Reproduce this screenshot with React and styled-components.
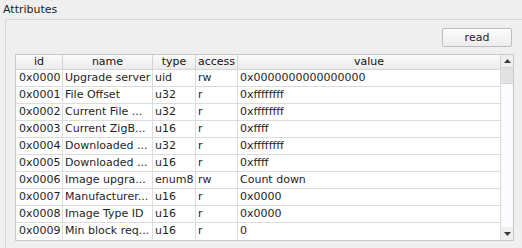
import React from "react";
import styled, { createGlobalStyle } from "styled-components";

const GlobalStyle = createGlobalStyle`
  body {
    margin: 0;
    background: #efefef;
    font-family: "DejaVu Sans", "Liberation Sans", sans-serif;
    font-size: 11px;
    color: #1e1e1e;
  }
`;

const attributes = [
  { id: "0x0000", name: "Upgrade server", type: "uid", access: "rw", value: "0x0000000000000000" },
  { id: "0x0001", name: "File Offset", type: "u32", access: "r", value: "0xffffffff" },
  { id: "0x0002", name: "Current File ...", type: "u32", access: "r", value: "0xffffffff" },
  { id: "0x0003", name: "Current ZigB...", type: "u16", access: "r", value: "0xffff" },
  { id: "0x0004", name: "Downloaded ...", type: "u32", access: "r", value: "0xffffffff" },
  { id: "0x0005", name: "Downloaded ...", type: "u16", access: "r", value: "0xffff" },
  { id: "0x0006", name: "Image upgra...", type: "enum8", access: "rw", value: "Count down" },
  { id: "0x0007", name: "Manufacturer...", type: "u16", access: "r", value: "0x0000" },
  { id: "0x0008", name: "Image Type ID", type: "u16", access: "r", value: "0x0000" },
  { id: "0x0009", name: "Min block req...", type: "u16", access: "r", value: "0" },
];

const columns = ["id", "name", "type", "access", "value"];

const Page = styled.div`
  width: 522px;
  height: 248px;
  overflow: hidden;
`;

const Title = styled.div`
  padding: 3px 0 0 3px;
  height: 16px;
  line-height: 13px;
`;

const GroupBox = styled.div`
  margin-left: 5px;
  border: 1px solid #d6d6d6;
  border-right: none;
  border-radius: 2px 0 0 2px;
  padding: 8px 9px 0 9px;
  height: 240px;
`;

const Toolbar = styled.div`
  display: flex;
  justify-content: flex-end;
  padding-right: 1px;
  margin-bottom: 7px;
`;

const Button = styled.button`
  width: 70px;
  height: 19px;
  padding: 0;
  font: inherit;
  color: #1e1e1e;
  border: 1px solid #bdbdbd;
  border-radius: 2px;
  background: linear-gradient(#fdfdfd, #ececec);
`;

const Table = styled.div`
  display: flex;
  width: 497px;
  border: 1px solid #c8c8c8;
  background: #ffffff;
`;

const Grid = styled.div`
  display: grid;
  grid-template-columns: 47px 90px 43px 42px 263px;
  grid-auto-rows: 17px;
  grid-template-rows: 15px;
  flex: none;
`;

const HeaderCell = styled.div`
  text-align: center;
  line-height: 14px;
  color: #111;
  border-right: 1px solid #d4d4d4;
  border-bottom: 1px solid #d4d4d4;
  background: linear-gradient(#fbfbfb, #ebebeb);
  white-space: nowrap;
  overflow: hidden;
`;

const Cell = styled.div`
  padding-left: ${(p) => (p.$first ? "3px" : "2px")};
  line-height: 16px;
  border-right: 1px solid #dcdcdc;
  border-bottom: 1px solid #dcdcdc;
  white-space: nowrap;
  overflow: hidden;
  border-bottom-color: ${(p) => (p.$last ? "#ffffff" : "#dcdcdc")};
`;

const ScrollBar = styled.div`
  width: 12px;
  display: flex;
  flex-direction: column;
  background: #fbfafc;
`;

const Arrow = styled.div`
  height: ${(p) => p.$h}px;
  background: #efefef;
  display: flex;
  align-items: center;
  justify-content: center;
`;

const Handle = styled.div`
  height: 15px;
  background: #e2e2e2;
  border-top: 1px solid #d6d6d6;
  border-bottom: 1px solid #d6d6d6;
`;

const Track = styled.div`
  flex: 1;
`;

const Triangle = ({ down }) => (
  <svg width="7" height="4" viewBox="0 0 7 4">
    <path d={down ? "M0 0 H7 L3.5 4 Z" : "M0 4 H7 L3.5 0 Z"} fill="#3a3a3a" />
  </svg>
);

export default function App() {
  return (
    <Page>
      <GlobalStyle />
      <Title>Attributes</Title>
      <GroupBox>
        <Toolbar>
          <Button>read</Button>
        </Toolbar>
        <Table>
          <Grid>
            {columns.map((c) => (
              <HeaderCell key={c}>{c}</HeaderCell>
            ))}
            {attributes.map((a, i) =>
              columns.map((c, j) => (
                <Cell key={a.id + c} $first={j === 0} $last={i === attributes.length - 1}>
                  {a[c]}
                </Cell>
              ))
            )}
          </Grid>
          <ScrollBar>
            <Arrow $h={12}>
              <Triangle />
            </Arrow>
            <Handle />
            <Track />
            <Arrow $h={13}>
              <Triangle down />
            </Arrow>
          </ScrollBar>
        </Table>
      </GroupBox>
    </Page>
  );
}
